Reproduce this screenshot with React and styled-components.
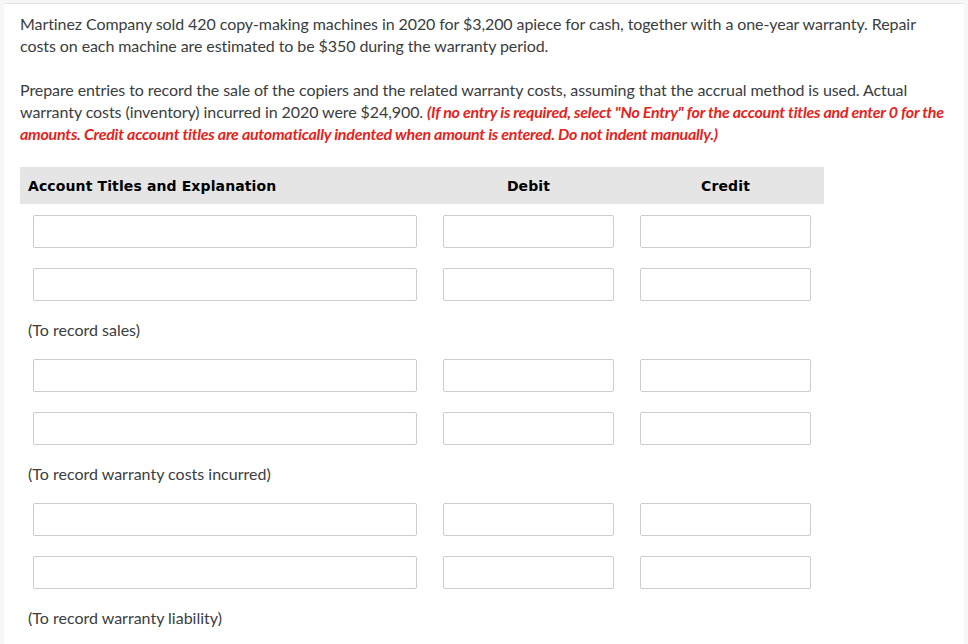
import React from 'react';
import styled, { createGlobalStyle } from 'styled-components';

const GlobalStyle = createGlobalStyle`
  html, body {
    margin: 0;
    padding: 0;
    background: #f6f6f6;
  }
  body {
    font-family: Lato, "Open Sans", sans-serif;
  }
`;

const Panel = styled.div`
  margin: 3px 0 0 4px;
  width: 960px;
  min-height: 641px;
  box-sizing: border-box;
  background: #fff;
  border-top: 1px solid #e4e4e4;
  padding: 9px 16px 0 16px;
`;

const Para = styled.p`
  margin: 0 0 22px 0;
  font-size: 16px;
  line-height: 22px;
  letter-spacing: -0.08px;
  color: #3a3d41;
`;

const Warn = styled.em`
  color: #e5231c;
  font-weight: 700;
  font-style: italic;
  letter-spacing: -0.26px;
`;

const Journal = styled.div`
  display: grid;
  grid-template-columns: 410px 197px 197px;
`;

const HeadCell = styled.div`
  background: #e5e5e5;
  height: 37px;
  display: flex;
  align-items: center;
  justify-content: ${p => (p.$center ? 'center' : 'flex-start')};
  padding-left: ${p => (p.$center ? '0' : '8px')};
  font-family: "DejaVu Sans", Verdana, sans-serif;
  font-weight: 700;
  font-size: 14px;
  letter-spacing: 0.12px;
  color: #000;
`;

const Cell = styled.div`
  height: 53px;
  box-sizing: border-box;
  padding: 11px 13px 0 13px;
`;

const Field = styled.input`
  display: block;
  width: 100%;
  height: 33px;
  box-sizing: border-box;
  border: 1px solid #cccccc;
  border-radius: 2px;
  background: #fff;
  outline: none;
  font-size: 14px;
  padding: 0 6px;
`;

const Note = styled.div`
  grid-column: 1 / -1;
  height: 38px;
  box-sizing: border-box;
  padding: 9px 0 0 8px;
  font-size: 16px;
  line-height: 22px;
  color: #3a3d41;
`;

const groups = [
  '(To record sales)',
  '(To record warranty costs incurred)',
  '(To record warranty liability)',
];

const EntryRow = () => (
  <>
    <Cell><Field type="text" /></Cell>
    <Cell><Field type="text" /></Cell>
    <Cell><Field type="text" /></Cell>
  </>
);

const App = () => {
  return (
    <>
      <GlobalStyle />
      <Panel>
        <Para>
          Martinez Company sold 420 copy-making machines in 2020 for $3,200 apiece for cash, together with a one-year warranty. Repair
          costs on each machine are estimated to be $350 during the warranty period.
        </Para>
        <Para>
          Prepare entries to record the sale of the copiers and the related warranty costs, assuming that the accrual method is used. Actual
          warranty costs (inventory) incurred in 2020 were $24,900.{' '}
          <Warn>
            (If no entry is required, select "No Entry" for the account titles and enter 0 for the
            amounts. Credit account titles are automatically indented when amount is entered. Do not indent manually.)
          </Warn>
        </Para>
        <Journal>
          <HeadCell>Account Titles and Explanation</HeadCell>
          <HeadCell $center>Debit</HeadCell>
          <HeadCell $center>Credit</HeadCell>
          {groups.map(label => (
            <React.Fragment key={label}>
              <EntryRow />
              <EntryRow />
              <Note>{label}</Note>
            </React.Fragment>
          ))}
        </Journal>
      </Panel>
    </>
  );
};

export default App;
